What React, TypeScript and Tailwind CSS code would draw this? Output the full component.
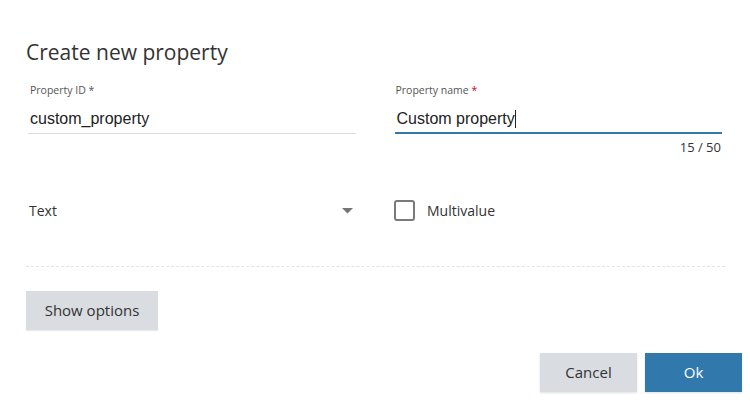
import React from "react"

export default function App() {
  return (
    <div className="w-[750px] h-[401px] bg-white overflow-hidden text-[#333]" style={{ fontFamily: '"Open Sans", sans-serif' }}>
      <div className="pl-[26px] pr-[25px] pt-[38px]">
        <h1 className="text-[21px] leading-[28px] text-[#333]">Create new property</h1>

        {/* ID + name */}
        <div className="flex gap-[39px] pl-[2px] pr-[3px] mt-[17px]">
          <div className="flex-1">
            <label className="block text-[10.5px] leading-[14px] text-[#555] pl-[2px]">Property ID *</label>
            <div className="mt-[12px] border-b border-[#dcdcdc] pb-[4px] pl-[2px] text-[16px] leading-[20px] text-[#222]" style={{ fontFamily: '"Liberation Sans", Arial, sans-serif' }}>
              custom_property
            </div>
          </div>
          <div className="flex-1">
            <label className="block text-[10.5px] leading-[14px] text-[#555] pl-[1px]">
              Property name <span className="text-[#d0021b]">*</span>
            </label>
            <div className="mt-[12px] border-b-2 border-[#3179ad] pb-[3px] pl-[2px] text-[16px] leading-[20px] text-[#222] flex items-center" style={{ fontFamily: '"Liberation Sans", Arial, sans-serif' }}>
              Custom property<span className="inline-block w-[1px] h-[18px] bg-[#222]" />
            </div>
            <div className="text-right text-[13px] leading-[16px] text-[#333] mt-[5px] pr-[1px]">15 / 50</div>
          </div>
        </div>

        {/* Type + multivalue */}
        <div className="flex gap-[39px] pl-[3px] pr-[3px] mt-[45px] items-center">
          <div className="flex-1 flex items-center justify-between pr-[6px]">
            <span className="text-[14px] leading-[20px]">Text</span>
            <svg width="11" height="6" viewBox="0 0 11 6"><path d="M0 0 L11 0 L5.5 5.5 Z" fill="#757575" /></svg>
          </div>
          <div className="flex-1 flex items-center">
            <span className="w-[21px] h-[21px] border-2 border-[#7a7a7a] rounded-[3px] -ml-[4px]" />
            <span className="ml-[12px] text-[14px] leading-[20px]">Multivalue</span>
          </div>
        </div>

        <div className="mt-[45px] border-t border-dashed border-[#e3e3e3]" />

        <button className="mt-[24px] w-[132px] h-[39px] bg-[#d9dce0] text-[15px] text-[#333] shadow-[0_1px_1px_rgba(0,0,0,0.08)]">
          Show options
        </button>

        <div className="flex justify-end gap-[8px] mt-[23px] -mr-[17px]">
          <button className="w-[97px] h-[39px] bg-[#d9dce0] text-[15px] text-[#333] shadow-[0_1px_2px_rgba(0,0,0,0.12)]">Cancel</button>
          <button className="w-[97px] h-[39px] bg-[#3179ad] text-[15px] text-white shadow-[0_1px_2px_rgba(0,0,0,0.12)]">Ok</button>
        </div>
      </div>
    </div>
  )
}
